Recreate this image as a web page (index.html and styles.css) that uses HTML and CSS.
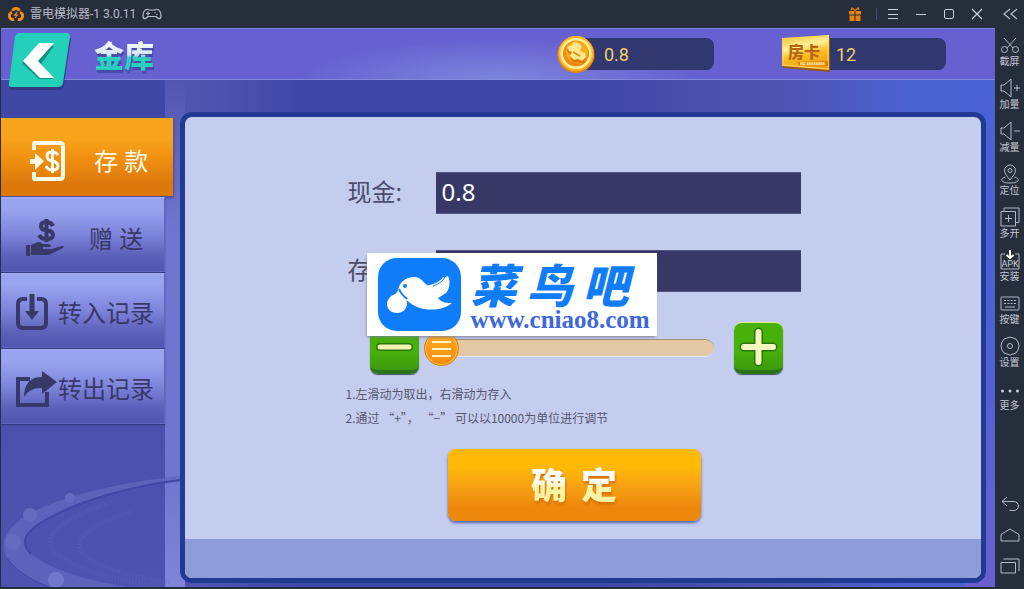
FILE: index.html
```html
<!DOCTYPE html>
<html lang="zh-CN">
<head>
<meta charset="utf-8">
<meta name="viewport" content="width=device-width, initial-scale=1">
<title>雷电模拟器-1 3.0.11</title>
<link rel="stylesheet" href="styles.css">
</head>
<body>
<div class="window">
  <header class="titlebar">
    <svg class="app-logo" width="16" height="16" viewBox="0 0 16 16" fill="none" stroke="#f08c1a" stroke-width="3"><path d="M4.6 4.8A3.6 3.6 0 0 1 11.4 4.8M12 6.4A3.6 3.6 0 0 1 10 13.4M6 13.4A3.6 3.6 0 0 1 4 6.4"/><path d="M9.4 6 6.6 9.2h2.6L7 12" stroke-width="1.2"/></svg>
    <h1 class="app-name">雷电模拟器-1 3.0.11</h1>
    <svg width="20" height="14" viewBox="0 0 20 14" fill="none" stroke="#b9bcc9" stroke-width="1.2"><path d="M6 2.5Q10 4 14 2.5C17 2 19 5 19 8.500C19 12.500 16.500 12.500 14 9.500H6C3.500 12.500 1 12.500 1 8.500C1 5 3 2 6 2.500Z"/><path d="M4 6.500h4M6 4.500v4M13 5v1M15 7v1"/></svg>
    <div class="window-actions">
      <button class="icon-button gift" aria-label="礼包"><svg width="14" height="15" viewBox="0 0 14 15" fill="#e8820c"><path d="M1 4h5.500v3.500H1zM7.500 4H13v3.500H7.500zM1.500 8.500h5V14h-5zM7.500 8.500h5V14h-5z"/><path d="M7 3.500 4 1 3 3M7 3.500 10 1l1 2" fill="none" stroke="#e8820c" stroke-width="1.300"/></svg></button>
      <span class="divider"></span>
      <button class="icon-button" aria-label="菜单"><svg width="12" height="12" viewBox="0 0 12 12" stroke="#cdd0dc"><path d="M1 1.500h10M1 6.500h10M1 10.500h10"/></svg></button>
      <button class="icon-button" aria-label="最小化"><svg width="12" height="12" viewBox="0 0 12 12" stroke="#cdd0dc"><path d="M1 6.500h10"/></svg></button>
      <button class="icon-button" aria-label="最大化"><svg width="12" height="12" viewBox="0 0 12 12" fill="none" stroke="#cdd0dc"><rect x="1.500" y="1.500" width="9" height="9" rx="1.500"/></svg></button>
      <button class="icon-button" aria-label="关闭"><svg width="12" height="12" viewBox="0 0 12 12" stroke="#cdd0dc" stroke-width="1.200"><path d="M1 1l10 10M11 1 1 11"/></svg></button>
    </div>
  </header>

  <aside class="toolbar">
    <button class="collapse" aria-label="收起"><svg width="16" height="12" viewBox="0 0 16 12" fill="none" stroke="#b9bcc9" stroke-width="1.200"><path d="M8 1 2 6l6 5M15 1 9 6l6 5"/></svg></button>
    <div class="tools">
      <button class="tool"><svg viewBox="0 0 20 20"><path d="M4 3l9 10M16 3 7 13"/><circle cx="4.500" cy="14.500" r="3"/><circle cx="15.500" cy="14.500" r="3"/></svg><span>截屏</span></button>
      <button class="tool"><svg viewBox="0 0 20 20"><path d="M1 7h3l7-6v18l-7-6H1zM14 10h6M17 7v6"/></svg><span>加量</span></button>
      <button class="tool"><svg viewBox="0 0 20 20"><path d="M1 7h3l7-6v18l-7-6H1zM14 10h6"/></svg><span>减量</span></button>
      <button class="tool"><svg viewBox="0 0 20 20"><path d="M10 16C7 12 4.500 9.500 4.500 6.500a5.500 5.500 0 0 1 11 0C15.500 9.500 13 12 10 16z"/><circle cx="10" cy="6.500" r="2"/><path d="M5.500 13C-1 15 1 19 10 19s11-4 4.500-6"/></svg><span>定位</span></button>
      <button class="tool"><svg viewBox="0 0 20 20"><path d="M1 4.500h14.500V19H1zM4 4V1h15v14.500h-3M5 11.500h7M8.500 8v7"/></svg><span>多开</span></button>
      <button class="tool"><svg viewBox="0 0 20 20"><path d="M5 4H1v15h18V4h-4"/><path d="M10 0v8M6.500 5 10 8l3.500-3" class="bright"/><text x="10" y="17" text-anchor="middle">APK</text></svg><span>安装</span></button>
      <button class="tool"><svg viewBox="0 0 20 20"><rect x="1" y="4" width="18" height="13" rx="1"/><path d="M4 7.500h12M4 10.500h12" stroke-dasharray="2 1.300"/><path d="M5 14h10"/></svg><span>按键</span></button>
      <button class="tool"><svg viewBox="0 0 20 20"><path d="M10 1l3 1 3 1 2 3 1 4-1 4-2 3-3 1-3 1-3-1-3-1-2-3-1-4 1-4 2-3 3-1z" stroke-linejoin="round"/><circle cx="10" cy="10" r="2.500"/></svg><span>设置</span></button>
      <button class="tool"><svg viewBox="0 0 20 20"><g fill="#cdd0dc" stroke="none"><circle cx="2.500" cy="12" r="1.500"/><circle cx="10" cy="12" r="1.500"/><circle cx="17.500" cy="12" r="1.500"/></g></svg><span>更多</span></button>
    </div>
    <div class="nav-keys">
      <button class="tool" aria-label="返回"><svg viewBox="0 0 20 20"><path d="M7 3 2 7.500 7 12M2 7.500h12a4.500 4.500 0 0 1 0 9H9.500"/></svg></button>
      <button class="tool" aria-label="主页"><svg viewBox="0 0 20 20"><path d="M1 9.500 10 4l9 5.500V16H1z"/></svg></button>
      <button class="tool" aria-label="最近任务"><svg viewBox="0 0 20 20"><path d="M1 6.500h14.500V17H1zM3.500 3H19v12"/></svg></button>
    </div>
  </aside>

  <main class="game">
    <svg class="swirl" viewBox="0 0 180 125" fill="none">
      <path d="M180 14C120 20 60 34 28 52 4 66-2 82 6 96 14 108 30 118 48 125h82C90 120 50 108 30 92 18 80 24 70 44 58 80 38 130 24 180 18z" fill="#6266bd" opacity=".8"/>
      <path d="M180 18C130 24 80 38 44 58 24 70 18 80 30 92" stroke="#4247a6" stroke-width="2"/>
      <path d="M6 96C14 108 30 118 48 125" stroke="#4247a6"/>
      <path d="M110 40C60 58 40 72 54 90 66 104 100 116 160 124M130 50C90 62 70 76 82 92 94 104 130 116 170 120" stroke="#6669c0" stroke-width="5" stroke-dasharray="1 2" opacity=".4"/>
      <g fill="#666ac0"><circle cx="69" cy="36" r="5"/><circle cx="29" cy="53" r="7"/><circle cx="12" cy="80" r="8"/><circle cx="55" cy="118" r="8" fill="#7278cd"/></g>
    </svg>

    <div class="game-header">
      <button class="back" aria-label="返回"><svg width="64" height="62" viewBox="0 0 64 62"><path d="M8 9h55l-7 46q-1 6-5 6H5q-4 0-4-4z" fill="#343a80"/><path d="M12 4h46q4 0 4 4l-7 46q-1 4-5 4H4q-4 0-3-4L7 8q1-4 5-4z" fill="#25d0bb"/><path d="M32 17h14L33 35l12 15H31L14 34z" fill="#128f85"/><path d="M31 14h15L30 32l16 17H32L15 32z" fill="#fff"/></svg></button>
      <h2 class="screen-title">金库</h2>
      <div class="purses">
        <div class="purse">
          <svg width="38" height="38" viewBox="0 0 38 38"><circle cx="19" cy="19.500" r="18.500" fill="#ef8509"/><circle cx="19" cy="18.500" r="17.500" fill="#ffb825"/><circle cx="19" cy="18.500" r="15.500" fill="#fff1a0"/><circle cx="19" cy="18.500" r="13" fill="#f18a10"/><circle cx="20" cy="17" r="11" fill="#fbae16"/><path d="M10 14l5-3 2-4 5 1 3 4-2 4 5 3 1 4-3 5-5-1-4 1-4-4 1-5-3-1z" fill="#d87808"/><path d="M10 12l5-2 2-3 5 1 3 4-2 4 5 2 1 4-4 4-4-2-4 1-4-4 2-4-3-1z" fill="#ffe98e"/><path d="M16 17l7 4" stroke="#e38711" stroke-width="1.500"/></svg>
          <output class="amount">0.8</output>
        </div>
        <div class="purse card">
          <svg width="49" height="38" viewBox="0 0 49 38"><defs><linearGradient id="gold" x2="0.300" y2="1"><stop stop-color="#f6b91f"/><stop offset=".4" stop-color="#fff19a"/><stop offset=".65" stop-color="#f8be28"/><stop offset="1" stop-color="#f29a0e"/></linearGradient></defs><path d="M1 5 48 1v36L1 33z" fill="#8a5a22"/><path d="M0 3 47 0v35L0 31z" fill="url(#gold)"/><path d="M1 4 46 1v33L1 30z" fill="none" stroke="#ffd95a"/><path d="M15 27l31-1v5l-29-1z" fill="#d9820b"/><text x="6" y="23" class="card-face">房卡</text><text x="18" y="30" class="card-serial">NO.88888888</text></svg>
          <output class="amount">12</output>
        </div>
      </div>
    </div>

    <nav class="tabs">
      <button class="tab active"><svg width="38" height="40" viewBox="0 0 38 40" fill="none" stroke="#fffbe8"><path d="M5 9V2.500Q5 2 6 2H31q3 0 3 3v30q0 3-3 3H6q-1 0-1-1v-6" stroke-width="4"/><path d="M1 18h5v-6l9 8-9 9v-6H1z" fill="#fffbe8" stroke="none"/><path d="M29 14q-2-3-6-3-5 0-5 4 0 4 5 5 6 1 6 5 0 4-6 4-4 0-6-4M23.500 8v24" stroke-width="3"/></svg><span>存 款</span></button>
      <button class="tab gift-tab"><svg width="38" height="40" viewBox="0 0 38 40" fill="#373968"><path d="M0 27q0-1 1-1h3v11H1q-1 0-1-1zM5 26l7-3q3 0 5 2h6q3 1 1 3h-7v2h9l10-3q3 0 1 2l-12 6q-2 1-4 1H5z"/><path d="M27 7q-2-4-7-4-5 0-5 4 0 4 5 4 7 1 7 5 0 4-7 4-5 0-7-4M20.500 0v23" fill="none" stroke="#373968" stroke-width="4"/></svg><span>赠 送</span></button>
      <button class="tab record"><svg width="42" height="40" viewBox="0 0 42 40" fill="none" stroke="#373968" stroke-width="4"><path d="M12 6H8Q3 6 3 11v19q0 5 5 5h18q5 0 5-5V11q0-5-5-5h-4"/><path d="M17 1v20" stroke-width="5"/><path d="M10 18h14l-7 9z" fill="#373968" stroke="none"/></svg><span>转入记录</span></button>
      <button class="tab record"><svg width="42" height="40" viewBox="0 0 42 40"><path d="M15 10H3v26h29V23" fill="none" stroke="#373968" stroke-width="4"/><path d="M27 2l15 11-15 12v-6C18 19 13 22 9 28 9 15 15 8 27 8z" fill="#373968"/></svg><span>转出记录</span></button>
    </nav>

    <section class="panel">
      <form class="vault" onsubmit="return false">
        <div class="field"><label for="cash">现金:</label><input id="cash" type="text" value="0.8" readonly></div>
        <div class="field"><label for="deposit">存入:</label><input id="deposit" type="text"></div>
        <div class="adjust">
          <button type="button" class="step" aria-label="减少"><svg width="41" height="41" viewBox="0 0 41 41"><path d="M6 21h29" stroke="#26770f" stroke-width="8" stroke-linecap="round"/><path d="M6 21h29" stroke="#f4f4b0" stroke-width="5" stroke-linecap="round"/></svg></button>
          <input class="slider" type="range" min="0" max="100" value="0" aria-label="存取金额">
          <button type="button" class="step" aria-label="增加"><svg width="41" height="41" viewBox="0 0 41 41"><path d="M6 21h29M20.500 6v30" stroke="#26770f" stroke-width="9" stroke-linecap="round"/><path d="M6 21h29M20.500 6v30" stroke="#f8f7bd" stroke-width="6" stroke-linecap="round"/></svg></button>
        </div>
        <div class="hints">
          <p>1.左滑动为取出，右滑动为存入</p>
          <p>2.通过 “+”， “−” 可以以10000为单位进行调节</p>
        </div>
        <button class="confirm" type="submit" aria-label="确定"><span>确</span><span>定</span></button>
        <div class="watermark">
          <svg width="83" height="73" viewBox="0 0 83 73"><rect width="83" height="73" rx="19" fill="#0f7dfa"/><path d="M20 32C22 22 30 19 36 19c7 0 9 5 13 8 8-1 14-4 16-8 2 0 3 0 5-1 3 6 1 14-2 17l-8 5c4 5 9 5 14 5-8 7-22 8-32 5C31 47 25 38 20 32z" fill="#fff"/><path d="M49 27q11-2 15-8M55 28q9-3 12-9" fill="none" stroke="#0f7dfa"/><path d="M20 31q0 4-5 6c-4 2-6 6-6 9 0 5 4 9 10 9s10-4 10-10c0-6-4-8-8-14z" fill="#fff"/><path d="M21 31q2 5 8 10" stroke="#0f7dfa" stroke-width="2" fill="none"/><circle cx="27" cy="28" r="2" fill="#0f7dfa"/></svg>
          <div class="brand"><strong><span>菜</span><span>鸟</span><span>吧</span></strong><span class="site">www.cniao8.com</span></div>
        </div>
      </form>
      <div class="panel-foot"></div>
    </section>
  </main>
</div>
</body>
</html>
```
FILE: styles.css
```css
* { box-sizing: border-box; }

body {
  margin: 0;
  background: #272e3b;
  font-family: "Noto Sans", "Noto Sans CJK SC", sans-serif;
}

button {
  border: 0;
  padding: 0;
  background: none;
  font: inherit;
  color: inherit;
}

h1, h2, p { margin: 0; }
svg { display: block; flex: none; }

.window {
  display: grid;
  grid-template-columns: minmax(0, 1fr) 29px;
  grid-template-rows: 28px 1fr;
  min-height: 100vh;
}

/* Window chrome */
.titlebar {
  display: flex;
  align-items: center;
  gap: 6px;
  padding-left: 8px;
  color: #b9bcc9;
}

.app-name {
  font: 400 12px/16px Roboto, "Noto Sans CJK SC", sans-serif;
}

.window-actions {
  display: flex;
  align-items: center;
  gap: 16px;
  margin-left: auto;
  padding-right: 12px;
}

.window-actions .divider {
  width: 1px;
  height: 12px;
  background: #474980;
  margin-right: -6px;
}

.window-actions .gift { margin-right: -2px; }

/* Right toolbar */
.toolbar {
  grid-column: 2;
  grid-row: 1 / 3;
  display: flex;
  flex-direction: column;
  align-items: center;
  padding-bottom: 13px;
  color: #c3c6d3;
}

.collapse {
  height: 28px;
  margin-bottom: 7px;
}

.tools, .nav-keys {
  display: flex;
  flex-direction: column;
  gap: 11px;
}

.nav-keys { margin-top: auto; }

.tool {
  display: flex;
  flex-direction: column;
  align-items: center;
  font-size: 10px;
  line-height: 12px;
}

.tool svg {
  width: 20px;
  height: 20px;
  fill: none;
  stroke: #b4b7c5;
  stroke-width: 1;
}

.tool .bright { stroke: #fff; stroke-width: 2; }

.tool text {
  font: 9px Roboto, sans-serif;
  fill: #cdd0dc;
  stroke: none;
}

/* Game scene */
.game {
  position: relative;
  display: grid;
  grid-template-columns: 164px minmax(0, 1fr);
  grid-template-rows: 52px 1fr;
  margin: 0 0 2px 1px;
  background:
    linear-gradient(#4a62d4 0 50%, #6b5fd0) right / 30px 100% no-repeat,
    linear-gradient(transparent 50px, #6f76cf 200px 450px, #8085da) 164px 0 / 20px 100% no-repeat,
    linear-gradient(90deg, #5155b0 20%, #4147a8 30% 60%, #5053b0 78%, #4a62d2 92%);
}

.swirl {
  position: absolute;
  left: 0;
  bottom: 0;
  width: 180px;
  height: 125px;
  z-index: 1;
}

.game-header {
  grid-column: 1 / 3;
  display: flex;
  align-items: flex-start;
  position: relative;
  z-index: 2;
  padding-left: 7px;
  border-top: 1px solid #7d84df;
  border-bottom: 1px solid #858ae0;
  background:
    radial-gradient(ellipse 200px 40px at 50% 100%, #7d86dc, transparent),
    #6660d0;
}

.screen-title {
  margin: 2px 0 0 22px;
  font: 900 30px/46px "Noto Sans CJK SC", sans-serif;
  color: transparent;
  background: linear-gradient(#fff 20%, #d3e4fa 52%, #27d1bd 58%);
  background-clip: text;
  -webkit-background-clip: text;
  filter: drop-shadow(1px 3px 0 #4a4ba8);
}

.purses {
  display: flex;
  gap: 68px;
  margin: 6px 49px 0 auto;
}

.purse {
  display: flex;
  align-items: center;
}

.purse svg { z-index: 1; }

.amount {
  width: 138px;
  height: 32px;
  margin-left: -19px;
  padding-left: 28px;
  border-radius: 0 8px 8px 0;
  background: #31376f;
  color: #f5cd62;
  font: 18px/34px Roboto, sans-serif;
}

.card .amount { padding-left: 24px; width: 134px; }

.card-face {
  font: 900 16px "Noto Sans CJK SC", sans-serif;
  fill: #b76510;
}

.card-serial {
  font: 700 4px Roboto, sans-serif;
  fill: #fff3a0;
}

/* Sidebar */
.tabs {
  display: flex;
  flex-direction: column;
  gap: 1px;
  padding-top: 38px;
  background: linear-gradient(#4147a5 0 40px, #4b50ad 350px, #4e53b0);
}

.tab {
  position: relative;
  z-index: 2;
  display: flex;
  align-items: center;
  gap: 25px;
  height: 75px;
  padding-left: 25px;
  border: 1px solid #6266bd;
  border-top-color: #a5aef5;
  border-left: 0;
  background: linear-gradient(#9aa3ef 15%, #7d84db 50%, #5d62ba 78%, #5056b1);
  box-shadow: 0 1px 1px #353a85;
  color: #373968;
  font-size: 24px;
  line-height: 32px;
  white-space: nowrap;
}

.tab.active {
  width: 172px;
  height: 78px;
  gap: 27px;
  padding: 6px 0 0 28px;
  border: 0;
  border-top: 1px solid #ffb31a;
  background: linear-gradient(#f9a31b 25%, #ee8d10 55%, #dc780c 85%);
  box-shadow: 1px 2px 2px #4d4e99;
  color: #fffbe8;
}

.tab.gift-tab { padding-top: 8px; }

.tab.record {
  gap: 1px;
  padding: 4px 0 0 14px;
}

/* Vault panel */
.panel {
  display: flex;
  flex-direction: column;
  margin: 32px 9px 4px 15px;
  border: 5px solid #203b91;
  border-radius: 12px;
  background: #c5cdef;
  overflow: hidden;
  z-index: 2;
}

.panel-foot {
  height: 39px;
  margin-top: auto;
  background: #8e9cd7;
}

.vault {
  position: relative;
  display: flex;
  flex-direction: column;
  width: 453px;
  max-width: 100%;
  margin: 55px auto 18px;
  left: -9px;
}

.field {
  display: flex;
  align-items: center;
  margin-bottom: 36px;
  color: #4a4c6c;
  font-size: 24px;
}

.field label {
  width: 88px;
  padding-bottom: 5px;
}

.field input {
  flex: 1;
  min-width: 0;
  height: 42px;
  padding: 0 6px 3px;
  border: 1px solid #50527f;
  border-width: 1px 0;
  border-radius: 0;
  background: #373866;
  color: #fff;
  font: inherit;
}

.adjust {
  display: flex;
  align-items: center;
  margin: -6px 18px 8px 22px;
}

.step {
  display: grid;
  place-items: center;
  width: 49px;
  height: 52px;
  border-radius: 8px;
  border-top: 1px solid #d8ee8a;
  border-bottom: 4px solid #2c7317;
  background: linear-gradient(#47b009 60%, #3d9b0e);
  box-shadow: 0 1px 1px #3f5a66;
}

.slider {
  flex: 1;
  min-width: 0;
  height: 36px;
  margin: 0 20px 0 5px;
  appearance: none;
  background: none;
}

.slider::-webkit-slider-runnable-track {
  height: 18px;
  border-top: 1px solid #a58d78;
  border-bottom: 1px solid #d9e8fa;
  border-radius: 9px;
  background: #e2c9a4;
}

.slider::-webkit-slider-thumb {
  appearance: none;
  width: 35px;
  height: 35px;
  margin-top: -9px;
  border: 1px solid #e47d08;
  border-radius: 50%;
  background:
    linear-gradient(#fff3c8 0 2px, transparent 2px 7px, #fff3c8 7px 9px, transparent 9px 14px, #fff3c8 14px 16px) center / 19px 16px no-repeat,
    linear-gradient(#ffab22, #f38c0c);
  box-shadow: inset 0 0 0 1px #ffc34f;
}

.hints {
  color: #55576e;
  font: 12px/24px "Noto Sans CJK SC", sans-serif;
  margin-left: -2px;
}

.confirm {
  display: flex;
  align-items: center;
  justify-content: center;
  gap: 14px;
  align-self: center;
  width: 253px;
  max-width: 100%;
  height: 72px;
  margin-top: 19px;
  padding-bottom: 5px;
  border-radius: 8px;
  background: linear-gradient(#ffb906 25%, #f8a315 50%, #ee880d 80%);
  box-shadow: 0 2px 3px #5267a9;
  font: 900 36px/52px "Noto Sans CJK SC", sans-serif;
}

.confirm span {
  color: transparent;
  background: linear-gradient(#fff 45%, #f8f3a5 60%);
  background-clip: text;
  -webkit-background-clip: text;
  filter: drop-shadow(1px 3px 1px #d97508);
}

/* Site mark laid over the form */
.watermark {
  position: absolute;
  left: 19px;
  top: 81px;
  display: flex;
  align-items: center;
  gap: 10px;
  width: 290px;
  height: 83px;
  padding-left: 11px;
  background: #fff;
  box-shadow: -1px 2px 3px -1px #787d96;
}

.brand {
  display: flex;
  flex-direction: column;
  color: #0f7dfa;
}

.brand strong {
  display: flex;
  gap: 10px;
  font: italic 900 46px/50px "Noto Sans CJK SC", sans-serif;
}

.site {
  color: #3e68dc;
  font: 700 25px/24px "Liberation Serif", serif;
}
```
